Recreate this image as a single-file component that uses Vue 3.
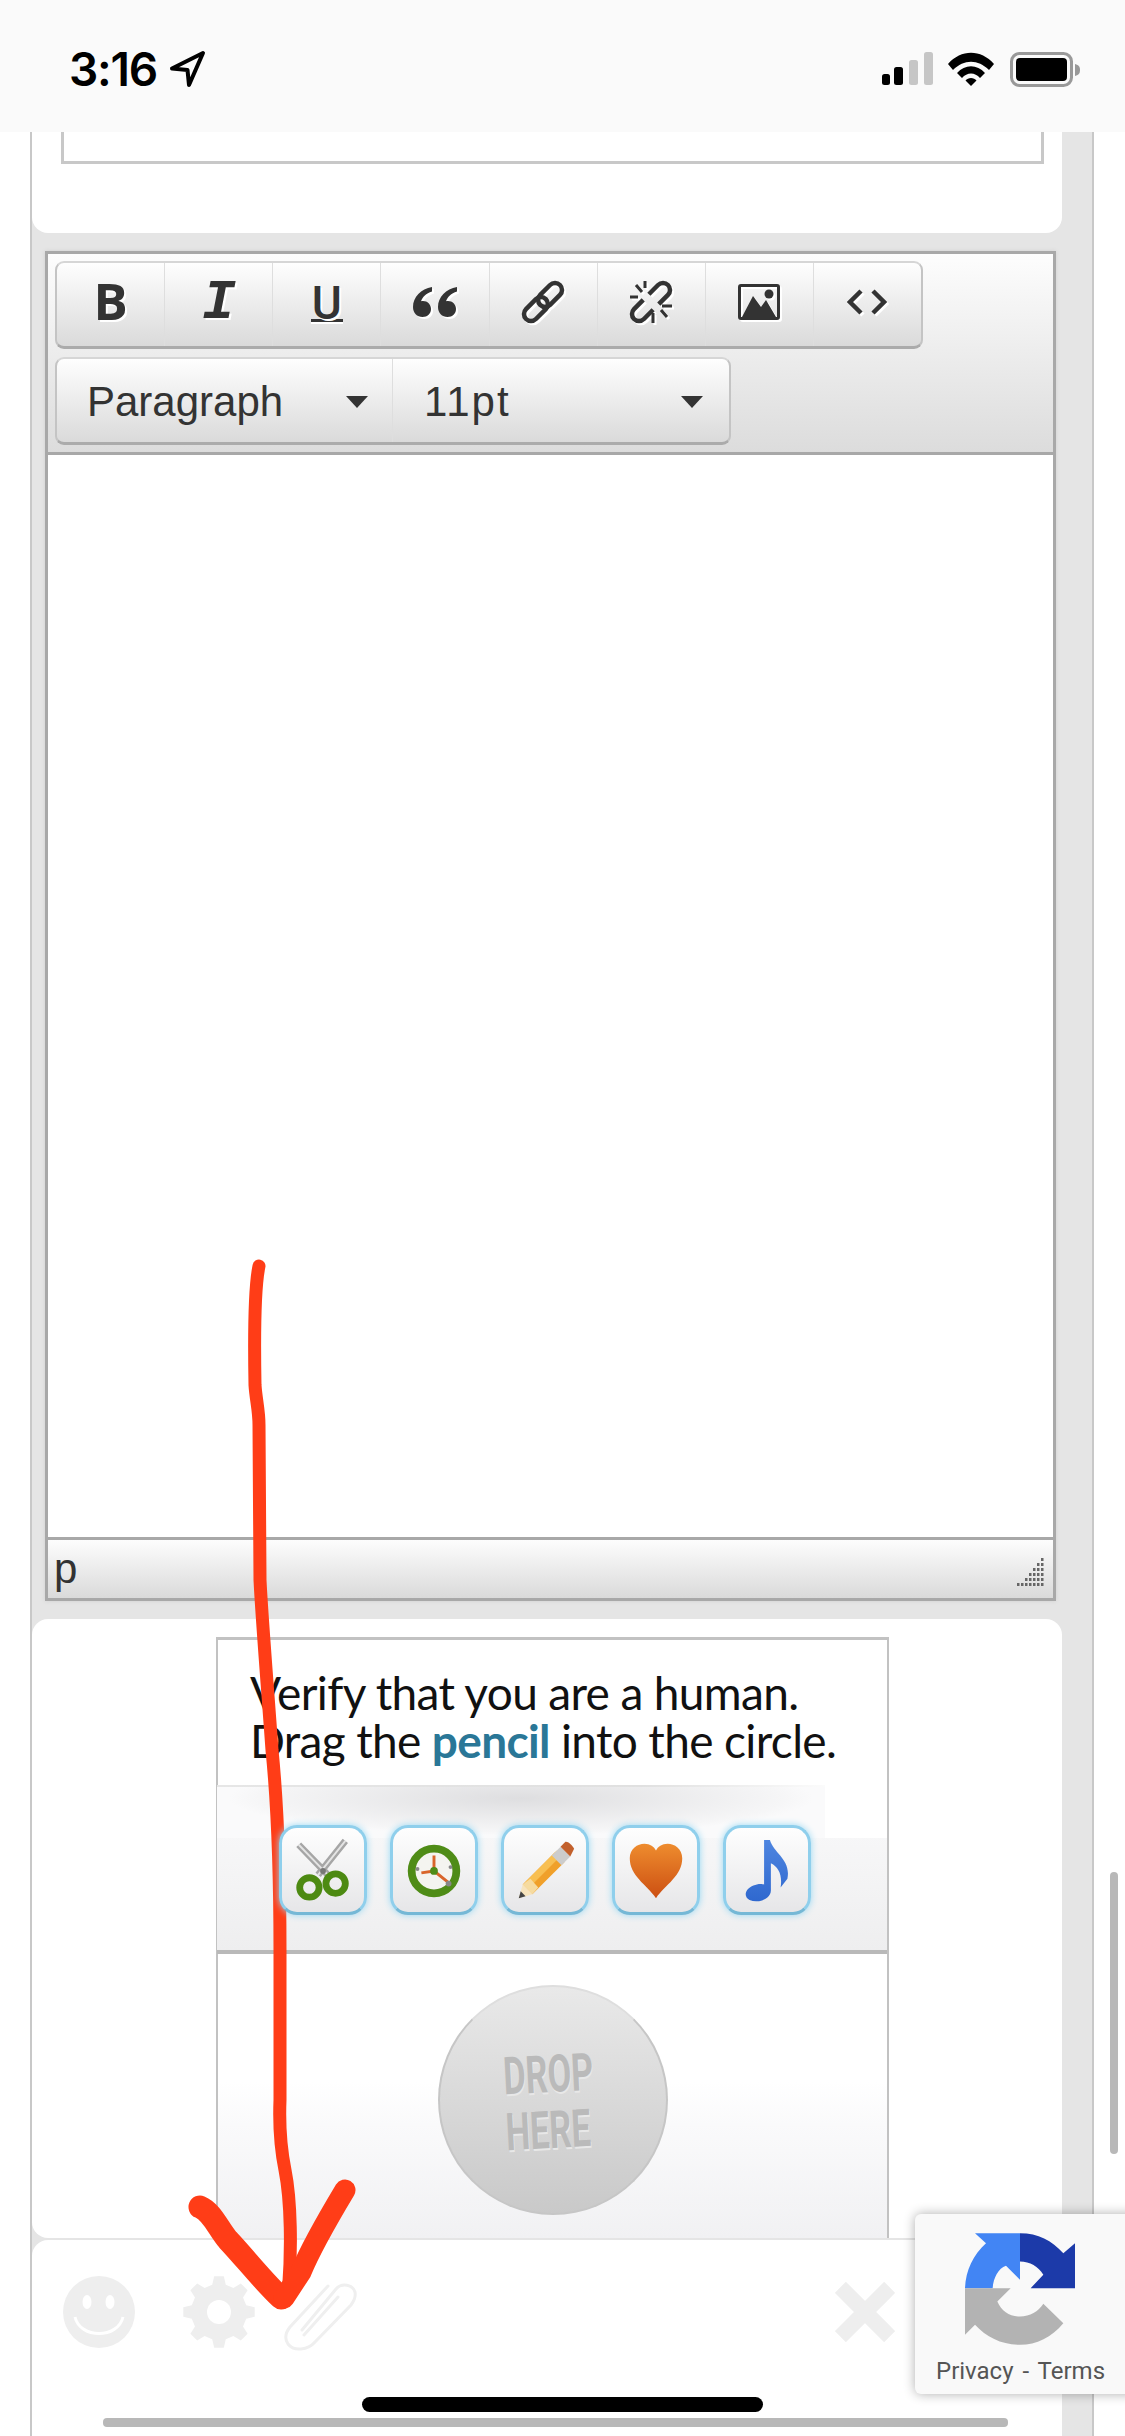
<script setup>
const resizeDots = [
  [24, 0], [20, 5], [24, 5], [16, 10], [20, 10], [24, 10], [12, 15], [16, 15], [20, 15], [24, 15],
  [8, 20], [12, 20], [16, 20], [20, 20], [24, 20], [0, 25], [4, 25], [8, 25], [12, 25], [16, 25], [20, 25], [24, 25]
]
const gearPath = (() => {
  const pts = []
  const teeth = 8
  for (let i = 0; i < teeth; i++) {
    const a = (i / teeth) * Math.PI * 2
    const s = Math.PI / teeth
    const p = (r, t) => `${(36 + r * Math.cos(t)).toFixed(1)} ${(36 + r * Math.sin(t)).toFixed(1)}`
    pts.push(p(28, a - s * 0.62), p(36, a - s * 0.34), p(36, a + s * 0.34), p(28, a + s * 0.62))
  }
  return 'M' + pts.join('L') + 'Z'
})()
</script>

<template>
  <div class="root">
    <header class="status">
      <div class="status-left">
        <span class="time">3:16</span>
        <svg class="loc" width="38" height="38" viewBox="0 0 38 38"><path d="M34 3 3 18.500 18.500 20 20 35Z" fill="#fafafa" stroke="#000" stroke-width="4" stroke-linejoin="round"/></svg>
      </div>
      <div class="status-right">
        <svg width="52" height="34" viewBox="0 0 52 34">
          <rect x="0" y="22" width="8" height="11" rx="2.500" fill="#000"/>
          <rect x="12" y="15" width="9" height="18" rx="2.500" fill="#000"/>
          <rect x="27" y="8" width="9" height="25" rx="2.500" fill="#c6c6c6"/>
          <rect x="42" y="0" width="9" height="33" rx="2.500" fill="#c6c6c6"/>
        </svg>
        <svg class="wifi" width="46" height="34" viewBox="0 0 46 34">
          <path d="M0 12C13-3 33-3 46 12L41 18C30 7 16 7 5 18Z" fill="#000"/>
          <path d="M9 21C17 12 29 12 37 21L32 26C27 20 19 20 14 26Z" fill="#000"/>
          <path d="M17.500 28.500C20 25 26 25 28.500 28.500L23 34Z" fill="#000"/>
        </svg>
        <svg class="battery" width="72" height="36" viewBox="0 0 72 36">
          <rect x="1.500" y="1.500" width="60" height="32" rx="8" fill="none" stroke="#999" stroke-width="3"/>
          <rect x="6" y="6" width="51" height="23" rx="4" fill="#000"/>
          <path d="M65 12C69 13 70 15 70 18C70 21 69 23 65 24Z" fill="#999"/>
        </svg>
      </div>
    </header>

    <main class="frame">
      <section class="card card-top"><div class="input-box"></div></section>

      <section class="editor">
        <div class="toolbar">
          <div class="btn-group">
            <div class="tool"><span class="glyph g-b">B</span></div>
            <div class="tool"><span class="glyph g-i">I</span></div>
            <div class="tool"><span class="glyph g-u">U</span></div>
            <div class="tool">
              <svg class="ico" width="46" height="32" viewBox="0 0 46 32"><path d="M20 1C9 3 1 11 1 21C1 27 5 31 10.500 31C15.500 31 19 27.500 19 23C19 18.500 15.500 15 11 15C10 15 9.500 15.200 9 15.300C10.500 11 14 7.500 20 5.500ZM45 1C34 3 26 11 26 21C26 27 30 31 35.500 31C40.500 31 44 27.500 44 23C44 18.500 40.500 15 36 15C35 15 34.500 15.200 34 15.300C35.500 11 39 7.500 45 5.500Z" fill="#333"/></svg>
            </div>
            <div class="tool">
              <svg class="ico" width="44" height="44" viewBox="0 0 44 44"><g fill="none" stroke="#333" stroke-width="4.500" transform="rotate(-45 22 22)"><rect x="18" y="15" width="28" height="14" rx="7"/><rect x="-2" y="15" width="28" height="14" rx="7"/></g></svg>
            </div>
            <div class="tool">
              <svg class="ico" width="44" height="44" viewBox="0 0 44 44"><g fill="none" stroke="#333" stroke-width="4.500" transform="rotate(-45 22 22)"><path d="M18 15H5A7 7 0 0 0 5 29H18"/><path d="M26 15H39A7 7 0 0 1 39 29H26"/></g><path d="M16 1V8M7 5 13 12M1 17H9M33 26H43M32 30 38 37M24 33V43" stroke="#333" stroke-width="3" fill="none"/></svg>
            </div>
            <div class="tool">
              <svg class="ico" width="42" height="36" viewBox="0 0 42 36"><rect x="1.500" y="1.500" width="39" height="33" rx="1.500" fill="none" stroke="#333" stroke-width="3"/><path d="M4 33 15 12 23 23 28 16 38 33Z" fill="#333"/><circle cx="31" cy="10" r="4.500" fill="#333"/></svg>
            </div>
            <div class="tool">
              <svg class="ico" width="40" height="26" viewBox="0 0 40 26"><path d="M14 2 3 13 14 24M26 2 37 13 26 24" fill="none" stroke="#333" stroke-width="4.500"/></svg>
            </div>
          </div>
          <div class="btn-group select-group">
            <div class="select sel-a"><span>Paragraph</span><i class="caret"></i></div>
            <div class="select sel-b"><span>11pt</span><i class="caret"></i></div>
          </div>
        </div>
        <div class="edit-area"></div>
        <div class="edit-status">
          <span>p</span>
          <svg class="grip" width="28" height="30" viewBox="0 0 28 30"><rect v-for="(d, i) in resizeDots" :key="i" :x="d[0]" :y="d[1]" width="2.500" height="3" fill="#666"/></svg>
        </div>
      </section>

      <section class="card card-captcha">
        <div class="captcha">
          <p class="prompt">Verify that you are a human.<br>Drag the <b>pencil</b> into the circle.</p>
          <div class="strip">
            <div class="tiles">
              <div class="tile">
                <svg viewBox="0 0 70 70"><g fill="none"><path d="M40 40 10 9M30 40 58 5" stroke="#a6a6a6" stroke-width="7"/><path d="M40 40 10 9M30 40 58 5" stroke="#e4e4e4" stroke-width="2"/><circle cx="21" cy="53" r="10" stroke="#4d8a12" stroke-width="7"/><circle cx="48" cy="49" r="10" stroke="#4d8a12" stroke-width="7"/><circle cx="35" cy="36" r="3" fill="#777"/></g></svg>
              </div>
              <div class="tile">
                <svg viewBox="0 0 70 70"><circle cx="35" cy="36" r="23" fill="#f4f4f0" stroke="#4f8c17" stroke-width="8"/><path d="M35 20V36L50 48M35 36 22 38" fill="none" stroke="#d9652b" stroke-width="3"/><circle cx="35" cy="36" r="4" fill="#4f8c17"/><circle cx="50" cy="49" r="3" fill="#888"/><circle cx="52" cy="32" r="2" fill="#888"/><circle cx="18" cy="34" r="2" fill="#888"/></svg>
              </div>
              <div class="tile">
                <svg viewBox="0 0 70 70"><path d="M12 50 45 17 55 27 22 60Z" fill="#f0a02a"/><path d="M14 48 47 15 50 22 20 52Z" fill="#f8bf52"/><path d="M12 50 20 44 28 53 22 60Z" fill="#f6dba0"/><path d="M8 64 12 50 22 60Z" fill="#f7e4bd"/><path d="M8 64 10 57 15 62Z" fill="#444"/><path d="M42 20 51 11 61 21 52 30Z" fill="#ccc"/><path d="M51 11 56 6C58 5 63 9 65 13L61 21Z" fill="#c2602c"/></svg>
              </div>
              <div class="tile">
                <svg viewBox="0 0 70 70"><defs><linearGradient id="heartFill" x1="0" y1="0" x2="0" y2="1"><stop offset="0" stop-color="#ee8c2e"/><stop offset="1" stop-color="#cc4f12"/></linearGradient></defs><path d="M35 64C25 50 8 41 8 23C8 13 16 8 23 8C29 8 33 11 35 15C37 11 41 8 47 8C54 8 62 13 62 23C62 41 45 50 35 64Z" fill="url(#heartFill)"/></svg>
              </div>
              <div class="tile">
                <svg viewBox="0 0 70 70"><defs><linearGradient id="noteFill" x1="0" y1="0" x2="0" y2="1"><stop offset="0" stop-color="#4f86e0"/><stop offset="1" stop-color="#2f68cf"/></linearGradient></defs><path d="M32 4 38 4C42 18 60 24 56 44L49 53C51 40 47 32 39 28V56C39 64 27 70 17 66C10 62 13 54 21 51C25 49 30 49 32 50Z" fill="url(#noteFill)"/></svg>
              </div>
            </div>
          </div>
          <div class="drop-zone">
            <div class="circle"><span>DROP</span><span>HERE</span></div>
          </div>
        </div>
      </section>

      <section class="card card-bottom">
        <div class="bottom-left">
          <svg class="smile" width="72" height="72" viewBox="0 0 72 72"><circle cx="36" cy="36" r="36" fill="#eee"/><ellipse cx="24" cy="26" rx="4.500" ry="7" fill="#fff"/><ellipse cx="47" cy="26" rx="4.500" ry="7" fill="#fff"/><path d="M12 41C17 63 55 63 60 41" fill="none" stroke="#fff" stroke-width="3"/></svg>
          <svg class="gear" width="72" height="72" viewBox="0 0 72 72"><path :d="gearPath" fill="#eee"/><circle cx="36" cy="36" r="12" fill="#fff"/></svg>
          <svg class="clip" width="74" height="72" viewBox="0 0 74 72"><path d="M18 50 52 9C58 2 69 5 71 12C72 17 70 21 67 25L31 62C24 70 10 72 4 64C0 58 2 52 6 47L44 6M20 55 54 17" fill="none" stroke="#efefef" stroke-width="3" stroke-linecap="round"/></svg>
        </div>
        <svg class="close" width="60" height="60" viewBox="0 0 60 60"><path d="M8 8 52 52M52 8 8 52" stroke="#eee" stroke-width="18" stroke-linecap="square" transform="translate(30 30) scale(.87) translate(-30 -30)"/></svg>
      </section>
    </main>

    <aside class="recaptcha">
      <svg width="110" height="112" viewBox="195 100 330 335">
        <path d="M360 100V240L318 198C295 205 280 235 278 265H195C197 210 220 165 258 130L225 100Z" fill="#4285f4"/>
        <path d="M360 100C415 100 455 122 490 160L525 130V265H392L430 225C415 200 390 185 360 185Z" fill="#1c3aa9"/>
        <path d="M195 265H332L292 305C305 335 330 350 360 350C390 350 415 335 430 312L490 370C455 412 410 435 360 435C305 435 260 413 225 375L195 405Z" fill="#b3b3b3"/>
      </svg>
      <div class="rc-links">Privacy - Terms</div>
    </aside>

    <div class="v-scroll"></div>
    <div class="home-bar"></div>
    <div class="h-scroll"></div>

    <svg class="scribble" width="1125" height="2436" viewBox="0 0 1125 2436">
      <path d="M259 1266C255 1285 254 1330 255 1385C256 1400 259 1410 259 1425L260 1580C262 1620 267 1680 272 1750C277 1800 280 1880 280 1950L280 2100C279 2125 280 2145 285 2170C291 2200 292 2250 288 2296" fill="none" stroke="#ff3d17" stroke-width="13" stroke-linecap="round" stroke-linejoin="round"/>
      <path d="M200 2207C212 2212 218 2228 228 2240C245 2258 262 2280 281 2298" fill="none" stroke="#ff3d17" stroke-width="23" stroke-linecap="round"/>
      <path d="M345 2190C330 2215 312 2245 301 2272L284 2298" fill="none" stroke="#ff3d17" stroke-width="21" stroke-linecap="round"/>
    </svg>
  </div>
</template>

<style scoped>
.root {
  position: relative;
  width: 1125px;
  height: 2436px;
  overflow: hidden;
  background: #fff;
  font-family: "Liberation Sans", Arial, sans-serif;
}
.status {
  height: 132px;
  background: #fafafa;
  display: flex;
  justify-content: space-between;
  align-items: flex-start;
  padding: 50px 43px 0 69px;
  box-sizing: border-box;
}
.status-left { display: flex; align-items: center; gap: 12px; }
.time { font: 600 46px/38px Inter, sans-serif; letter-spacing: -1.200px; color: #000; }
.status-right { display: flex; align-items: flex-start; gap: 14px; padding-top: 2px; }
.battery { margin-left: 2px; }
.frame {
  width: 1064px;
  height: 2304px;
  margin-left: 30px;
  box-sizing: border-box;
  border-left: 2px solid #c8c8c8;
  border-right: 2px solid #c8c8c8;
  padding-right: 30px;
  background: #e5e5e5;
}
.card { background: #fff; }
.card-top {
  height: 101px;
  border-radius: 0 0 16px 16px;
  padding-left: 29px;
}
.input-box {
  width: 983px;
  height: 32px;
  box-sizing: border-box;
  border: 3px solid #c8c8c8;
  border-top: 0;
}
.editor {
  width: 1011px;
  height: 1350px;
  margin: 18px 0 18px 13px;
  box-sizing: border-box;
  border: 3px solid #a8a8a8;
  display: flex;
  flex-direction: column;
  box-shadow: 0 0 4px #d0d0d0;
}
.toolbar {
  height: 201px;
  box-sizing: border-box;
  padding: 7px 7px 0;
  background: linear-gradient(#fdfdfd, #dcdcdc);
  border-bottom: 3px solid #a8a8a8;
}
.btn-group {
  display: flex;
  width: 868px;
  height: 88px;
  box-sizing: border-box;
  border: 2px solid #c4c4c4;
  border-top-color: #d6d6d6;
  border-bottom: 3px solid #ababab;
  border-radius: 9px;
  background: linear-gradient(#fefefe, #dadada);
}
.tool {
  flex: 1;
  display: flex;
  align-items: center;
  justify-content: center;
  border-right: 1px solid #dedede;
  padding-bottom: 5px;
}
.tool:last-child { border-right: 0; }
.glyph { color: #333; line-height: 1; text-shadow: 2px 2px 0 #fff; }
.g-b { font: 700 51px/1 "Open Sans", sans-serif; margin-bottom: 3px; }
.g-i { font: italic 700 56px/1 "Liberation Mono", monospace; margin-top: 2px; }
.g-u {
  font: 500 46px/40px Roboto, sans-serif;
  border-bottom: 3px solid #333;
  padding: 0 1px;
  box-shadow: 0 2px 0 #fff;
  height: 36px;
}
.ico { filter: drop-shadow(2px 2px 0 #fff); }
.select-group {
  width: 676px;
  margin-top: 8px;
}
.select {
  display: flex;
  align-items: center;
  justify-content: space-between;
  height: 100%;
  box-sizing: border-box;
  font-size: 42px;
  color: #333;
  padding-top: 2px;
}
.sel-a { width: 336px; padding-left: 30px; padding-right: 24px; border-right: 1px solid #dedede; }
.sel-b { flex: 1; padding-left: 31px; padding-right: 26px; }
.sel-b span { letter-spacing: 2px; }
.caret {
  width: 0;
  height: 0;
  border-left: 11px solid transparent;
  border-right: 11px solid transparent;
  border-top: 12px solid #333;
}
.edit-area { flex: 1; background: #fff; }
.edit-status {
  height: 61px;
  box-sizing: border-box;
  border-top: 3px solid #a8a8a8;
  background: linear-gradient(#fdfdfd, #dadada);
  display: flex;
  align-items: center;
  justify-content: space-between;
  padding: 0 0 0 6px;
  font-size: 42px;
  line-height: 50px;
  color: #333;
}
.grip { margin: 7px 8px 0 0; }
.card-captcha {
  height: 619px;
  border-radius: 16px;
  padding: 18px 0 0 184px;
  overflow: hidden;
  box-sizing: border-box;
}
.captcha {
  width: 673px;
  height: 601px;
  box-sizing: border-box;
  border: 2px solid #c2c2c2;
  border-top-width: 3px;
  border-bottom: 0;
  display: flex;
  flex-direction: column;
}
.prompt {
  margin: 0;
  padding: 29px 0 20px 32px;
  font: 46px/48px Lato, sans-serif;
  letter-spacing: -.65px;
  color: #111;
  white-space: nowrap;
}
.prompt b { color: #2a7797; font-weight: 700; }
.strip {
  position: relative;
  height: 165px;
  background: linear-gradient(#fbfbfc, #eeeeef);
  border-bottom: 4px solid #b9b9b9;
  margin-left: -1px;
}
.strip::before {
  content: "";
  position: absolute;
  left: 0;
  top: 0;
  right: 0;
  height: 53px;
  background: #fff;
}
.strip::after {
  content: "";
  position: absolute;
  left: 0;
  top: 0;
  width: 608px;
  height: 53px;
  background:
    linear-gradient(90deg, #e6e6e6, #e0e0e0 70%, #fbfbfb) top / 100% 2px no-repeat,
    radial-gradient(ellipse 48% 70% at 50% 25%, #dedee0, #f6f6f7 90%, #fafafb);
}
.tiles {
  position: relative;
  z-index: 1;
  display: flex;
  gap: 23px;
  padding: 40px 0 0 62px;
}
.tile {
  width: 88px;
  height: 90px;
  box-sizing: border-box;
  border-radius: 18px;
  background: linear-gradient(#fefefe, #e6e6e8);
  border: 3px solid #8fcfec;
  border-bottom-color: #75b8d6;
  box-shadow: 0 0 7px #97d8f3;
  display: flex;
  align-items: center;
  justify-content: center;
}
.tile svg { width: 68px; height: 68px; filter: blur(.7px); }
.drop-zone {
  flex: 1;
  background: linear-gradient(#fff 0, #fff 45%, #fafafb 60%, #f1f1f3 100%);
  padding-top: 31px;
  display: flex;
  justify-content: center;
}
.circle {
  width: 230px;
  height: 230px;
  box-sizing: border-box;
  border-radius: 50%;
  border: 2px solid #c6c6c6;
  border-top-color: #dedede;
  background: linear-gradient(#e9e9e9, #c9c9c9);
  display: flex;
  flex-direction: column;
  align-items: center;
  justify-content: center;
  gap: 6px;
}
.circle span {
  font: 700 52px/50px Roboto, sans-serif;
  color: #bababa;
  text-shadow: 1px 2px 0 #e8e8e8;
  transform: translate(-4px, 3px) rotate(-3deg) scaleX(.66);
}
.card-bottom {
  height: 250px;
  margin-top: 2px;
  border-radius: 16px 16px 0 0;
  display: flex;
  justify-content: space-between;
  align-items: flex-start;
  padding: 36px 167px 0 31px;
  box-sizing: border-box;
}
.bottom-left { display: flex; align-items: flex-start; gap: 48px; }
.clip { margin: 4px 0 0 -19px; }
.close { margin-top: 6px; }
.recaptcha {
  position: absolute;
  left: 915px;
  top: 2214px;
  width: 230px;
  height: 180px;
  box-sizing: border-box;
  background: #f9f9f9;
  border-radius: 6px;
  box-shadow: 0 0 12px rgba(0, 0, 0, .32);
  padding: 19px 0 0 50px;
}
.recaptcha svg { display: block; }
.rc-links {
  margin: 11px 0 0 -29px;
  font: 24px/30px Roboto, sans-serif;
  word-spacing: 3px;
  color: #555;
  white-space: nowrap;
}
.v-scroll {
  position: absolute;
  left: 1110px;
  top: 1872px;
  width: 8px;
  height: 282px;
  border-radius: 4px;
  background: #b8b8b8;
}
.home-bar {
  position: absolute;
  left: 362px;
  top: 2397px;
  width: 401px;
  height: 15px;
  border-radius: 8px;
  background: #000;
}
.h-scroll {
  position: absolute;
  left: 103px;
  top: 2418px;
  width: 905px;
  height: 9px;
  border-radius: 4px;
  background: #b8b8b8;
}
.scribble { position: absolute; left: 0; top: 0; pointer-events: none; }
</style>
